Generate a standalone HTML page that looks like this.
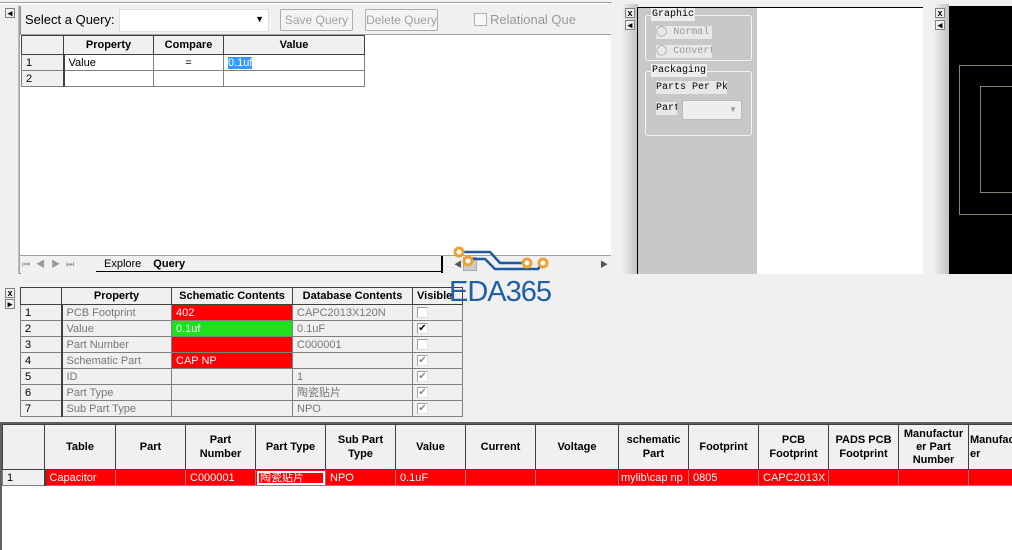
<!DOCTYPE html>
<html><head><meta charset="utf-8"><style>
*{margin:0;padding:0;box-sizing:border-box}
body{width:1012px;height:550px;background:#f0f0f0;position:relative;overflow:hidden;font-family:"Liberation Sans","Noto Sans CJK SC",sans-serif;font-size:11px;color:#000}
.a{position:absolute}
table{border-collapse:collapse;position:absolute;table-layout:fixed}
td{border:1px solid #808080;padding:0 4px;white-space:nowrap;overflow:hidden;height:16px;line-height:14px}
.hd td{background:#f0f0f0;font-weight:bold;text-align:center;border-color:#404040}
.rn{background:#f0f0f0;border-right:2px solid #404040}
.btn{position:absolute;border:1px solid #adadad;border-radius:2px;background:#f4f4f4;color:#a0a0a0;font-size:12px;text-align:center;line-height:20px;overflow:hidden;white-space:nowrap}
.xb{position:absolute;width:10px;height:10px;border:1px solid #808080;background:#f0f0f0;font-size:9px;line-height:8px;text-align:center;font-weight:bold}
.mono{font-family:"Liberation Mono",monospace;font-size:10px;line-height:13px;white-space:nowrap;overflow:hidden}
.cb{display:inline-block;width:11px;height:11px;border:1px solid #a0a0a0;border-right-color:#e0e0e0;border-bottom-color:#e0e0e0;background:#fff;vertical-align:middle;font-size:10px;line-height:9px;text-align:center;color:#888}
</style></head><body>
<div class="a" style="left:0;top:2px;width:612px;height:1px;background:#a0a0a0"></div>
<div class="a" style="left:0;top:3px;width:612px;height:1px;background:#fff"></div>
<div class="xb" style="left:5px;top:8px">◂</div>
<div class="a" style="left:18px;top:6px;width:3px;height:268px;background:linear-gradient(90deg,#c8c8c8,#808080)"></div>
<div class="a" style="left:25px;top:12px;font-size:13px">Select a Query:</div>
<div class="a" style="left:119px;top:9px;width:150px;height:23px;background:#fff;border:1px solid #e0e0e0"><span class="a" style="right:4px;top:4px;font-size:9px">▼</span></div>
<div class="btn" style="left:280px;top:9px;width:73px;height:22px">Save Query</div>
<div class="btn" style="left:365px;top:9px;width:73px;height:22px">Delete Query</div>
<div class="a" style="left:474px;top:13px;width:13px;height:13px;border:1px solid #b0b0b0;background:#f8f8f8"></div>
<div class="a" style="left:490px;top:12px;font-size:13px;color:#999">Relational Que</div>
<div class="a" style="left:20px;top:34px;width:591px;height:239px;background:#fff;border-top:1px solid #a0a0a0"></div>
<table style="left:21px;top:35px;width:343px">
<colgroup><col style="width:42px"><col style="width:90px"><col style="width:70px"><col style="width:141px"></colgroup>
<tr class="hd"><td style="height:19px"></td><td>Property</td><td>Compare</td><td>Value</td></tr>
<tr><td class="rn">1</td><td>Value</td><td style="text-align:center">=</td><td><span style="background:#3399ff;color:#fff">0.1uf</span></td></tr>
<tr><td class="rn">2</td><td></td><td></td><td></td></tr>
</table>
<div class="a" style="left:20px;top:255px;width:591px;height:18px;background:#f0f0f0;border-top:1px solid #a0a0a0"></div>
<div class="a" style="left:22px;top:257px;width:70px;height:14px;color:#999;font-size:9px;letter-spacing:6px">⏮◀▶⏭</div>
<div class="a" style="left:96px;top:258px;font-size:11px;border-bottom:1px solid #000;width:345px;height:14px"><span style="margin-left:8px">Explore</span><span style="margin-left:12px;font-weight:bold">Query</span></div>
<div class="a" style="left:441px;top:256px;width:2px;height:17px;background:#000"></div>
<div class="a" style="left:600px;top:259px;font-size:8px;color:#555">▶</div>
<div class="a" style="left:454px;top:259px;font-size:8px;color:#555">◀</div>
<div class="a" style="left:463px;top:257px;width:14px;height:14px;background:#ccc;border:1px solid #aaa"></div>
<svg class="a" style="left:440px;top:240px" width="130" height="40">
<path d="M19 12 H50 L60 23 H87" stroke="#1e5a9e" stroke-width="2.5" fill="none"/>
<path d="M28 19 H45 L55 29 H98 L103 23" stroke="#1e5a9e" stroke-width="2.5" fill="none"/>
<g fill="#fff" stroke="#f0a030" stroke-width="3"><circle cx="19" cy="12" r="4"/><circle cx="28" cy="21" r="4"/><circle cx="87" cy="23" r="4"/><circle cx="103" cy="23" r="4"/></g>
</svg>
<div class="a" style="left:622px;top:4px;width:16px;height:270px;background:linear-gradient(90deg,#f0f0f0,#c0c0c0)"></div>
<div class="xb" style="left:625px;top:8px">x</div>
<div class="xb" style="left:625px;top:20px">◂</div>
<div class="a" style="left:637px;top:7px;width:286px;height:267px;background:#fff;border-left:1px solid #000;border-top:1px solid #000"></div>
<div class="a" style="left:638px;top:8px;width:119px;height:266px;background:#c8c8c8"></div>
<div class="a" style="left:645px;top:15px;width:107px;height:46px;border:1px solid #f4f4f4;border-radius:3px"></div>
<div class="a mono" style="left:651px;top:8px;background:#eee;padding:0 1px">Graphic</div>
<div class="a mono" style="left:656px;top:26px;background:#e8e8e8;color:#999;width:56px">◯ Normal</div>
<div class="a mono" style="left:656px;top:45px;background:#e8e8e8;color:#999;width:56px">◯ Convert</div>
<div class="a" style="left:645px;top:71px;width:107px;height:65px;border:1px solid #f4f4f4;border-radius:3px"></div>
<div class="a mono" style="left:651px;top:64px;background:#eee;padding:0 1px">Packaging</div>
<div class="a mono" style="left:656px;top:81px;background:#e8e8e8;width:71px">Parts Per Pk</div>
<div class="a mono" style="left:656px;top:102px;background:#e8e8e8;width:21px">Part</div>
<div class="a" style="left:682px;top:100px;width:60px;height:20px;background:#eee;border:1px solid #bbb;border-radius:2px"><span class="a" style="right:4px;top:4px;font-size:8px;color:#999">▼</span></div>
<div class="a" style="left:934px;top:4px;width:15px;height:270px;background:linear-gradient(90deg,#f0f0f0,#c0c0c0)"></div>
<div class="xb" style="left:935px;top:8px">x</div>
<div class="xb" style="left:935px;top:20px">◂</div>
<div class="a" style="left:949px;top:6px;width:63px;height:268px;background:#000"></div>
<div class="a" style="left:959px;top:65px;width:60px;height:150px;border:1px solid #7a8a70"></div>
<div class="a" style="left:980px;top:86px;width:40px;height:107px;border:1px solid #7a8a70"></div>
<div class="xb" style="left:5px;top:288px">x</div>
<div class="xb" style="left:5px;top:299px">▸</div>
<table style="left:20px;top:287px;width:442px;color:#777">
<colgroup><col style="width:41px"><col style="width:110px"><col style="width:121px"><col style="width:120px"><col style="width:50px"></colgroup>
<tr class="hd" style="color:#000"><td style="height:17px"></td><td>Property</td><td>Schematic Contents</td><td>Database Contents</td><td style="text-align:left">Visible</td></tr>
<tr><td class="rn" style="color:#000">1</td><td>PCB Footprint</td><td style="background:#f00;color:#fff">402</td><td>CAPC2013X120N</td><td><span class="cb"></span></td></tr>
<tr><td class="rn" style="color:#000">2</td><td>Value</td><td style="background:#1ee01e;color:#fff">0.1uf</td><td>0.1uF</td><td><span class="cb" style="color:#000">✔</span></td></tr>
<tr><td class="rn" style="color:#000">3</td><td>Part Number</td><td style="background:#f00"></td><td>C000001</td><td><span class="cb"></span></td></tr>
<tr><td class="rn" style="color:#000">4</td><td>Schematic Part</td><td style="background:#f00;color:#fff">CAP NP</td><td></td><td><span class="cb">✔</span></td></tr>
<tr><td class="rn" style="color:#000">5</td><td>ID</td><td></td><td>1</td><td><span class="cb">✔</span></td></tr>
<tr><td class="rn" style="color:#000">6</td><td>Part Type</td><td></td><td>陶瓷贴片</td><td><span class="cb">✔</span></td></tr>
<tr><td class="rn" style="color:#000">7</td><td>Sub Part Type</td><td></td><td>NPO</td><td><span class="cb">✔</span></td></tr>
</table>
<div class="a" style="left:449px;top:276px;font-size:29px;color:#1e5fa8;letter-spacing:-1px;line-height:32px">EDA365</div>
<div class="a" style="left:0;top:422px;width:1012px;height:128px;background:#fff;border-top:2px solid #606060;border-left:2px solid #606060"></div>
<table style="left:2px;top:424px;width:1038px">
<colgroup><col style="width:42px"><col style="width:71px"><col style="width:70px"><col style="width:70px"><col style="width:70px"><col style="width:70px"><col style="width:70px"><col style="width:70px"><col style="width:83px"><col style="width:70px"><col style="width:70px"><col style="width:70px"><col style="width:70px"><col style="width:70px"><col style="width:72px"></colgroup>
<tr class="hd"><td style="height:45px"></td><td>Table</td><td>Part</td><td style="white-space:normal">Part Number</td><td>Part Type</td><td style="white-space:normal">Sub Part Type</td><td>Value</td><td>Current</td><td>Voltage</td><td style="white-space:normal">schematic Part</td><td>Footprint</td><td style="white-space:normal">PCB Footprint</td><td style="white-space:normal">PADS PCB Footprint</td><td style="white-space:normal;line-height:13px;padding:0 1px">Manufactur er Part Number</td><td style="white-space:normal;text-align:left;padding:0 1px">Manufactur er</td></tr>
<tr style="color:#fff"><td class="rn" style="color:#000">1</td><td style="background:#f00">Capacitor</td><td style="background:#f00"></td><td style="background:#f00">C000001</td><td style="background:#f00;outline:2px solid #fff;outline-offset:-3px">陶瓷贴片</td><td style="background:#f00">NPO</td><td style="background:#f00">0.1uF</td><td style="background:#f00"></td><td style="background:#f00"></td><td style="background:#f00;padding:0 2px">mylib\cap np</td><td style="background:#f00">0805</td><td style="background:#f00">CAPC2013X</td><td style="background:#f00"></td><td style="background:#f00"></td><td style="background:#f00"></td></tr>
</table>
</body></html>
